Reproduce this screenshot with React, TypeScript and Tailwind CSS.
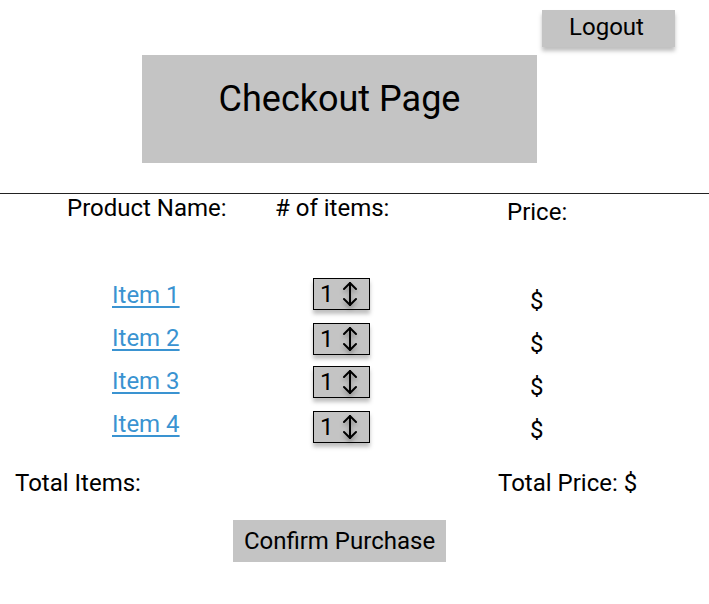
import React from "react";

const items = ["Item 1", "Item 2", "Item 3", "Item 4"];
// the little spinner boxes drift down a bit row by row
const boxOffset = ["pt-0", "pt-[2px]", "pt-[2px]", "pt-[4px]"];

function Spinner({ value }: { value: number }) {
  return (
    <div className="flex h-[32px] w-[57px] items-center border border-black bg-[#c4c4c4] pl-[6px] shadow-[0_4px_4px_rgba(0,0,0,0.25)]">
      <span className="text-[24px] leading-none">{value}</span>
      <svg
        className="ml-[8px] drop-shadow-[0_3px_2px_rgba(0,0,0,0.3)]"
        width="16"
        height="26"
        viewBox="0 0 16 26"
        fill="none"
        stroke="black"
        strokeWidth="2"
        strokeLinecap="round"
        strokeLinejoin="round"
      >
        <path d="M8 2v22" />
        <path d="M2 8l6-6 6 6" />
        <path d="M2 18l6 6 6-6" />
      </svg>
    </div>
  );
}

export default function App() {
  return (
    <div className="h-[604px] w-[709px] bg-white font-['Roboto',sans-serif] text-[24px] leading-[28px] text-black">
      <div className="flex justify-end pr-[34px] pt-[10px]">
        <button className="flex h-[37px] w-[133px] justify-center bg-[#c4c4c4] pr-[4px] pt-[3px] text-[24px] leading-[28px] shadow-[0_4px_4px_rgba(0,0,0,0.25)]">
          Logout
        </button>
      </div>

      <div className="ml-[142px] mt-[8px] flex h-[108px] w-[395px] justify-center bg-[#c4c4c4] pt-[24px] text-[36px] leading-[40px]">
        Checkout Page
      </div>

      <div className="mt-[30px] h-px bg-[#222]" />

      <div className="flex items-start">
        <div className="w-[275px] pl-[67px]">Product Name:</div>
        <div className="w-[232px]"># of items:</div>
        <div className="pt-[4px]">Price:</div>
      </div>

      <div className="mt-[52px] flex flex-col">
        {items.map((it, i) => (
          <div key={it} className="flex h-[43px] items-start">
            <div className="w-[313px] pl-[112px] pt-[3px]">
              <a href="#" className="text-[#3a93d1] underline decoration-[#3a93d1] underline-offset-[3px]">
                {it}
              </a>
            </div>
            <div className={"w-[217px] " + boxOffset[i]}>
              <Spinner value={1} />
            </div>
            <div className="pt-[9px]">$</div>
          </div>
        ))}
      </div>

      <div className="mt-[19px] flex">
        <div className="w-[498px] pl-[15px]">Total Items:</div>
        <div>Total Price: $</div>
      </div>

      <div className="mt-[23px] pl-[233px]">
        <button className="h-[42px] w-[213px] bg-[#c4c4c4] leading-[28px]">Confirm Purchase</button>
      </div>
    </div>
  );
}
